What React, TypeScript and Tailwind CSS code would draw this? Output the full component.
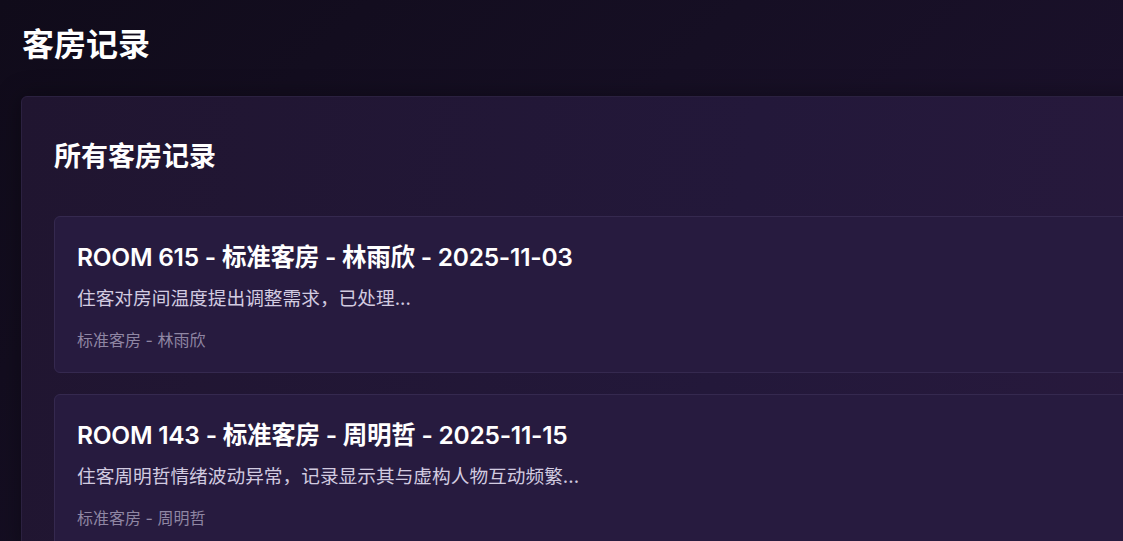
const records = [
  {
    room: "ROOM 615",
    type: "标准客房",
    guest: "林雨欣",
    date: "2025-11-03",
    summary: "住客对房间温度提出调整需求，已处理...",
  },
  {
    room: "ROOM 143",
    type: "标准客房",
    guest: "周明哲",
    date: "2025-11-15",
    summary: "住客周明哲情绪波动异常，记录显示其与虚构人物互动频繁...",
  },
];

export default function App() {
  return (
    <div
      className="h-[541px] w-full overflow-hidden bg-[#120c1d] text-white"
      style={{ fontFamily: "Inter, 'Noto Sans CJK SC', sans-serif" }}
    >
      <div className="h-full w-full bg-[linear-gradient(135deg,#100b1a_0%,#160f24_45%,#1e1230_100%)] pl-[21px] pt-[25px]">
        <h1 className="text-[32px] font-bold leading-[40px] pl-px">客房记录</h1>

        <section className="mt-[31px] w-[1400px] rounded-md border border-[#2b2140] bg-[linear-gradient(100deg,#201530_0%,#23183a_50%,#2a1a3e_100%)] pl-[32px] pt-[44px] shadow-[0_0_24px_rgba(0,0,0,0.35)]">
          <h2 className="text-[27px] font-bold leading-[32px]">所有客房记录</h2>

          <div className="mt-[43px] flex flex-col gap-[21px]">
            {records.map((r) => (
              <article
                key={r.room}
                className="rounded-md border border-[#35294f] bg-[#271b3f] px-[22px] pb-[20px] pt-[24px]"
              >
                <h3 className="text-[24.5px] font-semibold leading-[32px] tracking-[-0.01em]">
                  {r.room} - {r.type} - {r.guest} - {r.date}
                </h3>
                <p className="mt-[12px] text-[18.7px] leading-[28px] text-[#d2cbe0]">{r.summary}</p>
                <p className="mt-[15px] text-[16px] leading-[24px] text-[#8f86a3]">
                  {r.type} - {r.guest}
                </p>
              </article>
            ))}
          </div>
        </section>
      </div>
    </div>
  );
}
